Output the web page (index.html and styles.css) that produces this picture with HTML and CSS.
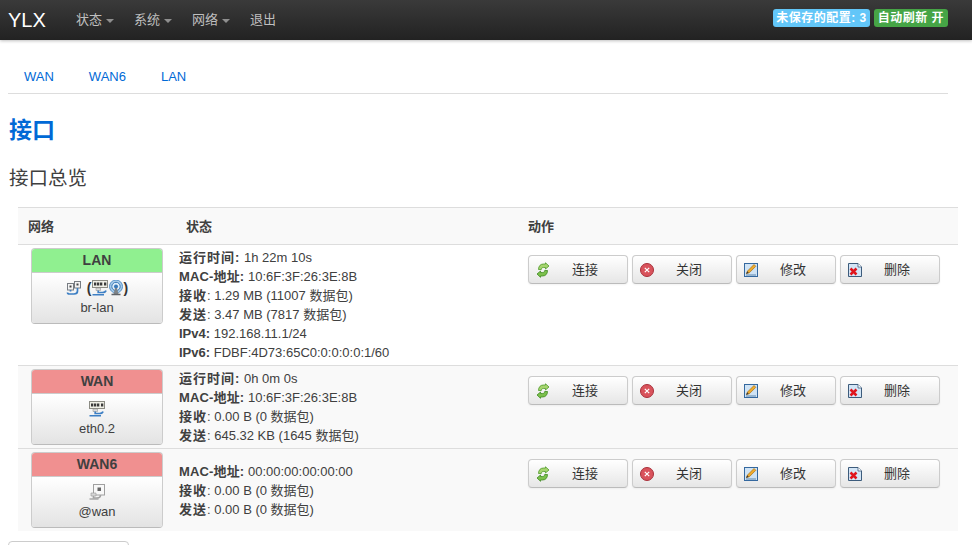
FILE: index.html
```html
<!DOCTYPE html>
<html lang="zh-CN">
<head>
<meta charset="utf-8">
<title>YLX - 接口</title>
<link rel="stylesheet" href="styles.css">
</head>
<body>
<svg class="defs" width="0" height="0" aria-hidden="true">
  <defs>
    <symbol id="i-eth" viewBox="0 0 16 16">
      <rect x="8.500" y="1.500" width="6" height="6.500" fill="#f4f4f4" stroke="#777c82"/>
      <rect x="10.500" y="3.500" width="2" height="2" fill="#444"/>
      <rect x="1.500" y="3.500" width="6" height="6.500" fill="#f4f4f4" stroke="#777c82"/>
      <rect x="3.500" y="5.500" width="2" height="2" fill="#444"/>
      <path d="M11.500 8v3c0 2-1.500 3-3.500 3H3.500c-1.500 0-2-.500-2-1.500" fill="none" stroke="#3d7fc4" stroke-width="1.700"/>
      <path d="M4.500 10v1.500" stroke="#3d7fc4" stroke-width="1.700"/>
    </symbol>
    <symbol id="i-eth-off" viewBox="0 0 16 16">
      <rect x="4.500" y=".500" width="11" height="10.500" fill="#f8f8f8" stroke="#a0a0a0"/>
      <rect x="8.500" y="3.500" width="3.500" height="3.500" fill="#666"/>
      <path d="M2 9h5v3H2z" fill="#d6d6d6" stroke="#999" stroke-width=".6"/>
      <path d="M4.500 12v2h3.500c2.500 0 3.500-1 3.500-3" fill="none" stroke="#a2a2a2" stroke-width="1.600"/>
      <path d="M.500 15h9" stroke="#a8a8a8" stroke-width="1.300"/>
    </symbol>
    <symbol id="i-switch" viewBox="0 0 16 16">
      <rect x=".500" y=".500" width="15" height="7" fill="#efefe6" stroke="#8c8c84"/>
      <path d="M2 2.500h2.300v3H2zM5 2.500h2.300v3H5zM8 2.500h2.300v3H8zM12 2.500h2.300v3H12z" fill="#3a3a3a"/>
      <path d="M4 8h4.500v2.500H4z" fill="#dcdcdc" stroke="#888" stroke-width=".5"/>
      <path d="M6.200 10.500v2h4.300c2.500 0 3-.500 3.500-2" fill="none" stroke="#3d7fc4" stroke-width="1.700"/>
      <path d="M.500 14.800h11.500" stroke="#3d7fc4" stroke-width="1.500"/>
    </symbol>
    <symbol id="i-wifi" viewBox="0 0 16 16">
      <circle cx="8" cy="6.500" r="6.500" fill="#a9cdea" stroke="#5490c8"/>
      <circle cx="8" cy="6.500" r="4.200" fill="#e0eef9" stroke="#3878b8"/>
      <circle cx="8" cy="6.500" r="2" fill="#3878b8"/>
      <path d="M7 8h2l1.500 6h-5z" fill="#7e8388"/>
      <path d="M3.500 14.500h9" stroke="#5f6368" stroke-width="1.700"/>
    </symbol>
    <symbol id="i-reload" viewBox="0 0 16 16">
      <path d="M3.500 7.500c0-3.500 2-5.500 5-5.500h2V.800L14 4l-3.500 3V5.500H8.500c-1.500 0-2.200.800-2.200 2z" fill="#a6d46f" stroke="#4f9a2a" stroke-width=".8"/>
      <path d="M12.500 8.500c0 3.500-2 5.500-5 5.500h-2v1.300L2 12l3.500-3v1.500h2c1.500 0 2.200-.800 2.200-2z" fill="#7cc04c" stroke="#3f8a22" stroke-width=".8"/>
    </symbol>
    <symbol id="i-close" viewBox="0 0 16 16">
      <circle cx="8" cy="8" r="6.500" fill="#d9535c" stroke="#a9303a"/>
      <path d="M5.800 5.800l4.400 4.400M10.200 5.800l-4.400 4.400" stroke="#fff" stroke-width="1.200"/>
    </symbol>
    <symbol id="i-edit" viewBox="0 0 16 16">
      <rect x="1.500" y="1.500" width="13" height="13" fill="#cfe3f5" stroke="#34689f"/>
      <path d="M3 13h10" stroke="#5d86ad"/>
      <path d="M3.500 11.500l1-2.500 6.500-6.500 1.800 1.800-6.500 6.500z" fill="#f0ab2c" stroke="#a86f10" stroke-width=".7"/>
      <path d="M3 12l1.300-2.700 1.400 1.400z" fill="#3a3a3a"/>
    </symbol>
    <symbol id="i-delete" viewBox="0 0 16 16">
      <path d="M1.500 1.500h9.500l3.500 3.500v9.500h-13z" fill="#d3e5f6" stroke="#3d5c7c"/>
      <path d="M11 1.500V5h3.500" fill="#fff" stroke="#3d5c7c" stroke-width=".8"/>
      <path d="M3.500 6.500l6 6M9.500 6.500l-6 6" stroke="#e0141c" stroke-width="2.500"/>
    </symbol>
  </defs>
</svg>

<header class="navbar">
  <a class="brand" href="#">YLX</a>
  <ul class="nav">
    <li><a href="#">状态<span class="caret"></span></a></li>
    <li><a href="#">系统<span class="caret"></span></a></li>
    <li><a href="#">网络<span class="caret"></span></a></li>
    <li><a href="#">退出</a></li>
  </ul>
  <div class="badges">
    <span class="badge badge-info">未保存的配置: 3</span>
    <span class="badge badge-ok">自动刷新 开</span>
  </div>
</header>

<main class="content">
  <ul class="tabs">
    <li><a href="#">WAN</a></li>
    <li><a href="#">WAN6</a></li>
    <li><a href="#">LAN</a></li>
  </ul>
  <h2 class="page-title">接口</h2>
  <h3 class="section-title">接口总览</h3>

  <table class="net-table">
    <colgroup>
      <col class="col-net">
      <col class="col-status">
      <col class="col-action">
    </colgroup>
    <thead>
      <tr><th>网络</th><th>状态</th><th>动作</th></tr>
    </thead>
    <tbody>
      <tr class="row-light">
        <td class="cell-net">
          <div class="card">
            <div class="card-head head-lan">LAN</div>
            <div class="card-body">
              <div class="icons">
                <svg class="ico ico-first"><use href="#i-eth"/></svg>
                <span class="paren">(</span><svg class="ico"><use href="#i-switch"/></svg><svg class="ico"><use href="#i-wifi"/></svg><span class="paren">)</span>
              </div>
              <div class="ifname">br-lan</div>
            </div>
          </div>
        </td>
        <td class="cell-status">
          <div><b class="cjk">运行时间:</b> 1h 22m 10s</div>
          <div><b class="mac">MAC-地址:</b> 10:6F:3F:26:3E:8B</div>
          <div><b class="cjk">接收</b>: 1.29 MB (11007 数据包)</div>
          <div><b class="cjk">发送</b>: 3.47 MB (7817 数据包)</div>
          <div><b>IPv4:</b> 192.168.11.1/24</div>
          <div><b>IPv6:</b> FDBF:4D73:65C0:0:0:0:0:1/60</div>
        </td>
        <td class="cell-action">
          <div class="actions">
            <button class="btn"><svg class="btn-ico"><use href="#i-reload"/></svg><span class="btn-text">连接</span></button>
            <button class="btn"><svg class="btn-ico"><use href="#i-close"/></svg><span class="btn-text">关闭</span></button>
            <button class="btn"><svg class="btn-ico"><use href="#i-edit"/></svg><span class="btn-text">修改</span></button>
            <button class="btn"><svg class="btn-ico"><use href="#i-delete"/></svg><span class="btn-text">删除</span></button>
          </div>
        </td>
      </tr>
      <tr class="row-shade">
        <td class="cell-net">
          <div class="card">
            <div class="card-head head-wan">WAN</div>
            <div class="card-body">
              <div class="icons"><svg class="ico"><use href="#i-switch"/></svg></div>
              <div class="ifname">eth0.2</div>
            </div>
          </div>
        </td>
        <td class="cell-status">
          <div><b class="cjk">运行时间:</b> 0h 0m 0s</div>
          <div><b class="mac">MAC-地址:</b> 10:6F:3F:26:3E:8B</div>
          <div><b class="cjk">接收</b>: 0.00 B (0 数据包)</div>
          <div><b class="cjk">发送</b>: 645.32 KB (1645 数据包)</div>
        </td>
        <td class="cell-action">
          <div class="actions">
            <button class="btn"><svg class="btn-ico"><use href="#i-reload"/></svg><span class="btn-text">连接</span></button>
            <button class="btn"><svg class="btn-ico"><use href="#i-close"/></svg><span class="btn-text">关闭</span></button>
            <button class="btn"><svg class="btn-ico"><use href="#i-edit"/></svg><span class="btn-text">修改</span></button>
            <button class="btn"><svg class="btn-ico"><use href="#i-delete"/></svg><span class="btn-text">删除</span></button>
          </div>
        </td>
      </tr>
      <tr class="row-shade">
        <td class="cell-net">
          <div class="card">
            <div class="card-head head-wan">WAN6</div>
            <div class="card-body">
              <div class="icons"><svg class="ico"><use href="#i-eth-off"/></svg></div>
              <div class="ifname">@wan</div>
            </div>
          </div>
        </td>
        <td class="cell-status">
          <div><b class="mac">MAC-地址:</b> 00:00:00:00:00:00</div>
          <div><b class="cjk">接收</b>: 0.00 B (0 数据包)</div>
          <div><b class="cjk">发送</b>: 0.00 B (0 数据包)</div>
        </td>
        <td class="cell-action">
          <div class="actions">
            <button class="btn"><svg class="btn-ico"><use href="#i-reload"/></svg><span class="btn-text">连接</span></button>
            <button class="btn"><svg class="btn-ico"><use href="#i-close"/></svg><span class="btn-text">关闭</span></button>
            <button class="btn"><svg class="btn-ico"><use href="#i-edit"/></svg><span class="btn-text">修改</span></button>
            <button class="btn"><svg class="btn-ico"><use href="#i-delete"/></svg><span class="btn-text">删除</span></button>
          </div>
        </td>
      </tr>
    </tbody>
  </table>
  <button class="btn-add" aria-label="添加新接口"></button>
</main>
</body>
</html>
```

FILE: styles.css
```css
* { box-sizing: border-box; }

html, body {
  margin: 0;
  height: 545px;
  overflow: hidden;
}

body {
  background: #fff;
  color: #404040;
  font: 13px/19px "Liberation Sans", "Noto Sans CJK SC", sans-serif;
}

.defs { position: absolute; }

a { text-decoration: none; }

/* Top bar */
.navbar {
  display: flex;
  align-items: center;
  height: 40px;
  padding: 0 24px 0 8px;
  background: linear-gradient(#3a3a3a, #222);
  box-shadow: 0 1px 3px rgba(0, 0, 0, .25);
}

.brand {
  width: 58px;
  color: #fff;
  font-size: 20px;
  line-height: 40px;
}

.nav {
  display: flex;
  margin: 0;
  padding: 0;
  list-style: none;
}

.nav a {
  display: flex;
  align-items: center;
  padding: 0 10px;
  color: #bfbfbf;
  line-height: 40px;
}

.caret {
  width: 0;
  height: 0;
  margin-left: 4px;
  margin-top: 2px;
  border: 4px solid transparent;
  border-top-color: #8f8f8f;
  border-bottom-width: 0;
}

.badges {
  display: flex;
  gap: 4px;
  margin-left: auto;
  margin-top: -4px;
}

.badge {
  padding: 0 3px;
  border-radius: 3px;
  color: #fff;
  font-size: 12px;
  font-weight: bold;
  letter-spacing: .5px;
  line-height: 18px;
  white-space: nowrap;
}

.badge-info { background: #62c6f8; }
.badge-ok { background: #46a546; padding: 0 4px; }

/* Content */
.content { padding: 20px 24px 0 8px; }

.tabs {
  display: flex;
  height: 34px;
  margin: 0;
  padding: 0 0 0 16px;
  border-bottom: 1px solid #ddd;
  list-style: none;
}

.tabs li { margin-right: 35px; }

.tabs a {
  color: #0069d6;
  line-height: 33px;
}

.page-title {
  margin: 18px 0 0 1px;
  color: #0069d6;
  font-size: 23px;
  font-weight: bold;
  line-height: 36px;
}

.section-title {
  margin: 15px 0 0 1px;
  color: #404040;
  font-size: 19.500px;
  font-weight: normal;
  line-height: 30px;
}

/* Table */
.net-table {
  width: 940px;
  margin: 14px 0 0 10px;
  border-collapse: collapse;
  table-layout: fixed;
}

.col-net { width: 158px; }
.col-status { width: 342px; }
.col-action { width: 440px; }

.net-table th {
  height: 37px;
  padding: 0 0 0 10px;
  border-top: 1px solid #ddd;
  border-bottom: 1px solid #ddd;
  background: #f9f9f9;
  font-weight: bold;
  text-align: left;
}

.net-table td {
  padding: 3px 0;
  border-bottom: 1px solid #ddd;
  vertical-align: top;
}

.net-table tr:last-child td { border-bottom: 0; }

.row-shade td { background: #f9f9f9; }

.cell-net { padding-left: 13px !important; }

.cell-status {
  padding-left: 3px !important;
  white-space: nowrap;
  vertical-align: middle !important;
}

.cell-status b { font-weight: bold; }
.cell-status .cjk { letter-spacing: 1px; }
.cell-status .mac { letter-spacing: .15px; }

.cell-action { padding: 10px 0 0 10px !important; }

/* Interface card */
.card {
  width: 132px;
  height: 76px;
  overflow: hidden;
  border: 1px solid #ccc;
  border-bottom-color: #bbb;
  border-radius: 4px;
}

.card-head {
  height: 23px;
  color: #404040;
  font-size: 14px;
  font-weight: bold;
  line-height: 23px;
  text-align: center;
}

.head-lan { background: #90f090; }
.head-wan { background: #f09090; }

.card-body {
  height: 51px;
  padding-top: 7px;
  border-top: 1px solid #ccc;
  background: linear-gradient(#fff, #e3e3e3);
  text-align: center;
}

.icons {
  display: flex;
  justify-content: center;
  align-items: center;
  height: 16px;
  margin-bottom: 2px;
}

.ico {
  flex: none;
  width: 16px;
  height: 16px;
}

.ico-first { margin-right: 5px; }

.paren {
  color: #333;
  font-size: 14px;
  font-weight: bold;
  line-height: 16px;
}

.ifname { line-height: 19px; }

/* Buttons */
.actions {
  display: flex;
  gap: 4px;
}

.btn {
  display: flex;
  align-items: center;
  width: 100px;
  height: 29px;
  padding: 0 10px 0 6px;
  border: 1px solid #ccc;
  border-bottom-color: #bbb;
  border-radius: 4px;
  background: linear-gradient(#fff, #e6e6e6);
  box-shadow: 0 1px 2px rgba(0, 0, 0, .05);
  color: #333;
  font: inherit;
}

.btn-ico {
  flex: none;
  width: 16px;
  height: 16px;
  margin-right: 2px;
}

.btn-text {
  flex: 1;
  text-align: center;
}

.btn-add {
  display: block;
  width: 121px;
  height: 29px;
  margin-top: 10px;
  border: 1px solid #ccc;
  border-radius: 4px;
  background: #fff;
}
```
